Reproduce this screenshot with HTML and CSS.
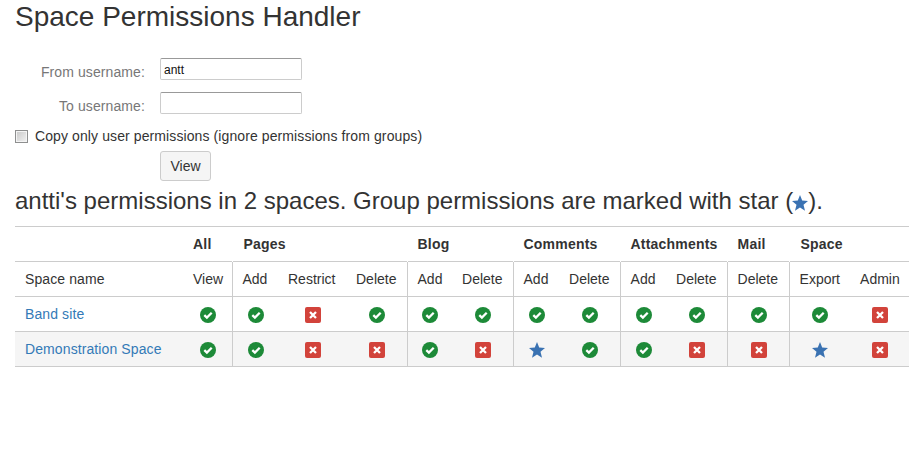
FILE: index.html
```html
<!DOCTYPE html>
<html>
<head>
  <title>Space Permissions Handler</title>
  <link rel="stylesheet" href="styles.css">
</head>
<body>
  <svg class="icon-defs" width="0" height="0">
    <symbol id="ok" viewBox="0 0 16 16">
      <circle cx="8" cy="8" r="8" fill="#1d8a38"/>
      <path d="M4.300 8.100l2.600 2.500 4.800-4.800" fill="none" stroke="#fff" stroke-width="2.300"/>
    </symbol>
    <symbol id="no" viewBox="0 0 16 16">
      <rect width="16" height="16" rx="2" fill="#d2433b"/>
      <path d="M5 5l6 6M11 5l-6 6" fill="none" stroke="#fff" stroke-width="2.300"/>
    </symbol>
    <symbol id="star" viewBox="0 0 16 16">
      <path d="M8 0l2.200 5.600 5.800.4-4.500 3.800 1.500 6L8 12.600l-5 3.200 1.500-6L0 6l5.800-.4z" fill="#3a72b2"/>
    </symbol>
  </svg>

  <h1 class="title">Space Permissions Handler</h1>

  <form class="perm-form">
    <div class="form-row">
      <label class="form-label" for="from-user">From username:</label>
      <input class="text-input" id="from-user" type="text" value="antt">
    </div>
    <div class="form-row">
      <label class="form-label" for="to-user">To username:</label>
      <input class="text-input" id="to-user" type="text">
    </div>
    <label class="check-row">
      <input class="check-box" type="checkbox">
      Copy only user permissions (ignore permissions from groups)
    </label>
    <div class="button-row">
      <button class="view-button" type="button">View</button>
    </div>
  </form>

  <h2 class="summary">antti's permissions in 2 spaces. Group permissions are marked with star (<svg class="icon summary-star"><use href="#star"/></svg>).</h2>

  <table class="perm-table">
    <colgroup>
      <col class="col-name">
      <col class="col-view">
      <col class="col-add">
      <col class="col-restrict">
      <col class="col-delete">
      <col class="col-add-narrow">
      <col class="col-delete">
      <col class="col-add">
      <col class="col-delete">
      <col class="col-add">
      <col class="col-delete">
      <col class="col-delete-wide">
      <col class="col-export">
      <col class="col-admin">
    </colgroup>
    <thead>
      <tr class="group-row">
        <th></th>
        <th>All</th>
        <th class="group-head pages-head" colspan="3">Pages</th>
        <th class="group-head" colspan="2">Blog</th>
        <th class="group-head" colspan="2">Comments</th>
        <th class="group-head" colspan="2">Attachments</th>
        <th class="group-head">Mail</th>
        <th class="group-head space-head" colspan="2">Space</th>
      </tr>
      <tr>
        <td class="name-cell">Space name</td>
        <td>View</td>
        <td class="group-start">Add</td>
        <td>Restrict</td>
        <td>Delete</td>
        <td class="group-start">Add</td>
        <td>Delete</td>
        <td class="group-start">Add</td>
        <td>Delete</td>
        <td class="group-start">Add</td>
        <td>Delete</td>
        <td class="group-start">Delete</td>
        <td class="group-start">Export</td>
        <td>Admin</td>
      </tr>
    </thead>
    <tbody>
      <tr>
        <td class="name-cell"><a href="#">Band site</a></td>
        <td class="icon-cell"><svg class="icon"><use href="#ok"/></svg></td>
        <td class="icon-cell group-start"><svg class="icon"><use href="#ok"/></svg></td>
        <td class="icon-cell"><svg class="icon"><use href="#no"/></svg></td>
        <td class="icon-cell"><svg class="icon"><use href="#ok"/></svg></td>
        <td class="icon-cell group-start"><svg class="icon"><use href="#ok"/></svg></td>
        <td class="icon-cell"><svg class="icon"><use href="#ok"/></svg></td>
        <td class="icon-cell group-start"><svg class="icon"><use href="#ok"/></svg></td>
        <td class="icon-cell"><svg class="icon"><use href="#ok"/></svg></td>
        <td class="icon-cell group-start"><svg class="icon"><use href="#ok"/></svg></td>
        <td class="icon-cell"><svg class="icon"><use href="#ok"/></svg></td>
        <td class="icon-cell group-start"><svg class="icon"><use href="#ok"/></svg></td>
        <td class="icon-cell group-start"><svg class="icon"><use href="#ok"/></svg></td>
        <td class="icon-cell"><svg class="icon"><use href="#no"/></svg></td>
      </tr>
      <tr class="striped">
        <td class="name-cell"><a href="#">Demonstration Space</a></td>
        <td class="icon-cell"><svg class="icon"><use href="#ok"/></svg></td>
        <td class="icon-cell group-start"><svg class="icon"><use href="#ok"/></svg></td>
        <td class="icon-cell"><svg class="icon"><use href="#no"/></svg></td>
        <td class="icon-cell"><svg class="icon"><use href="#no"/></svg></td>
        <td class="icon-cell group-start"><svg class="icon"><use href="#ok"/></svg></td>
        <td class="icon-cell"><svg class="icon"><use href="#no"/></svg></td>
        <td class="icon-cell group-start"><svg class="icon"><use href="#star"/></svg></td>
        <td class="icon-cell"><svg class="icon"><use href="#ok"/></svg></td>
        <td class="icon-cell group-start"><svg class="icon"><use href="#ok"/></svg></td>
        <td class="icon-cell"><svg class="icon"><use href="#no"/></svg></td>
        <td class="icon-cell group-start"><svg class="icon"><use href="#no"/></svg></td>
        <td class="icon-cell group-start"><svg class="icon"><use href="#star"/></svg></td>
        <td class="icon-cell"><svg class="icon"><use href="#no"/></svg></td>
      </tr>
    </tbody>
  </table>
</body>
</html>
```

FILE: styles.css
```css
* {
  box-sizing: border-box;
}

body {
  margin: 0;
  padding: 0 11px 0 15px;
  font-family: "Liberation Sans", Arial, sans-serif;
  font-size: 14px;
  line-height: 20px;
  color: #333;
  background-color: white;
}

.icon-defs {
  position: absolute;
}

.title {
  margin: 0;
  font-size: 28px;
  font-weight: normal;
  line-height: 34px;
}

/* Form */
.perm-form {
  margin-top: 24px;
}

.form-row {
  display: flex;
  align-items: center;
  height: 22px;
  margin-bottom: 12px;
}

.form-label {
  width: 130px;
  margin-right: 15px;
  padding-top: 5px;
  text-align: right;
  color: #777;
  letter-spacing: 0.1px;
}

.text-input {
  width: 142px;
  height: 22px;
  padding: 1px 3px 0;
  border: 1px solid #ccc;
  border-top-color: #999;
  border-radius: 2px;
  font-family: "Liberation Sans", Arial, sans-serif;
  font-size: 12px;
  color: #111;
}

.check-row {
  display: flex;
  align-items: center;
  height: 20px;
  letter-spacing: 0.1px;
}

.check-box {
  width: 13px;
  height: 13px;
  margin: 0 7px 0 0;
  appearance: none;
  border: 1px solid #8e8f8f;
  background: linear-gradient(135deg, #c8c8c8, #f2f2f2);
  box-shadow: inset 0 0 0 1px #f4f4f4;
}

.button-row {
  margin-top: 5px;
  padding-left: 145px;
}

.view-button {
  width: 51px;
  height: 30px;
  padding: 0;
  border: 1px solid #ccc;
  border-radius: 3px;
  background-color: #f5f5f5;
  font-family: "Liberation Sans", Arial, sans-serif;
  font-size: 14px;
  color: #333;
}

.summary {
  margin: 5px 0 0;
  font-size: 24px;
  font-weight: normal;
  line-height: 30px;
}

.icon {
  display: inline-block;
  width: 16px;
  height: 16px;
  vertical-align: middle;
}

.summary-star {
  margin-left: -1px;
}

/* Permissions table */
.perm-table {
  width: 894px;
  margin-top: 10px;
  table-layout: fixed;
  border-collapse: collapse;
}

.col-name { width: 168px; }
.col-view { width: 49px; }
.col-add { width: 46px; }
.col-add-narrow { width: 45px; }
.col-restrict { width: 68px; }
.col-delete { width: 61px; }
.col-delete-wide { width: 62px; }
.col-export { width: 61px; }
.col-admin { width: 59px; }

.perm-table th,
.perm-table td {
  height: 35px;
  padding: 7px 10px;
  border-top: 1px solid #ccc;
  text-align: left;
  white-space: nowrap;
}

.perm-table th {
  letter-spacing: 0.2px;
}

.perm-table .group-head {
  padding-left: 10px;
  border-left: 1px solid transparent;
}

.perm-table .pages-head {
  padding-left: 11px;
}

.perm-table .space-head {
  padding-left: 11px;
}

.perm-table tbody tr:last-child td {
  border-bottom: 1px solid #ccc;
}

.perm-table .name-cell {
  letter-spacing: 0.1px;
}

.perm-table .icon-cell {
  padding-left: 1px;
  padding-right: 0;
  text-align: center;
}

.perm-table .group-start {
  border-left: 1px solid #ccc;
}

.striped {
  background-color: #f5f5f5;
}

.perm-table a {
  color: #337ab7;
  text-decoration: none;
}
```
